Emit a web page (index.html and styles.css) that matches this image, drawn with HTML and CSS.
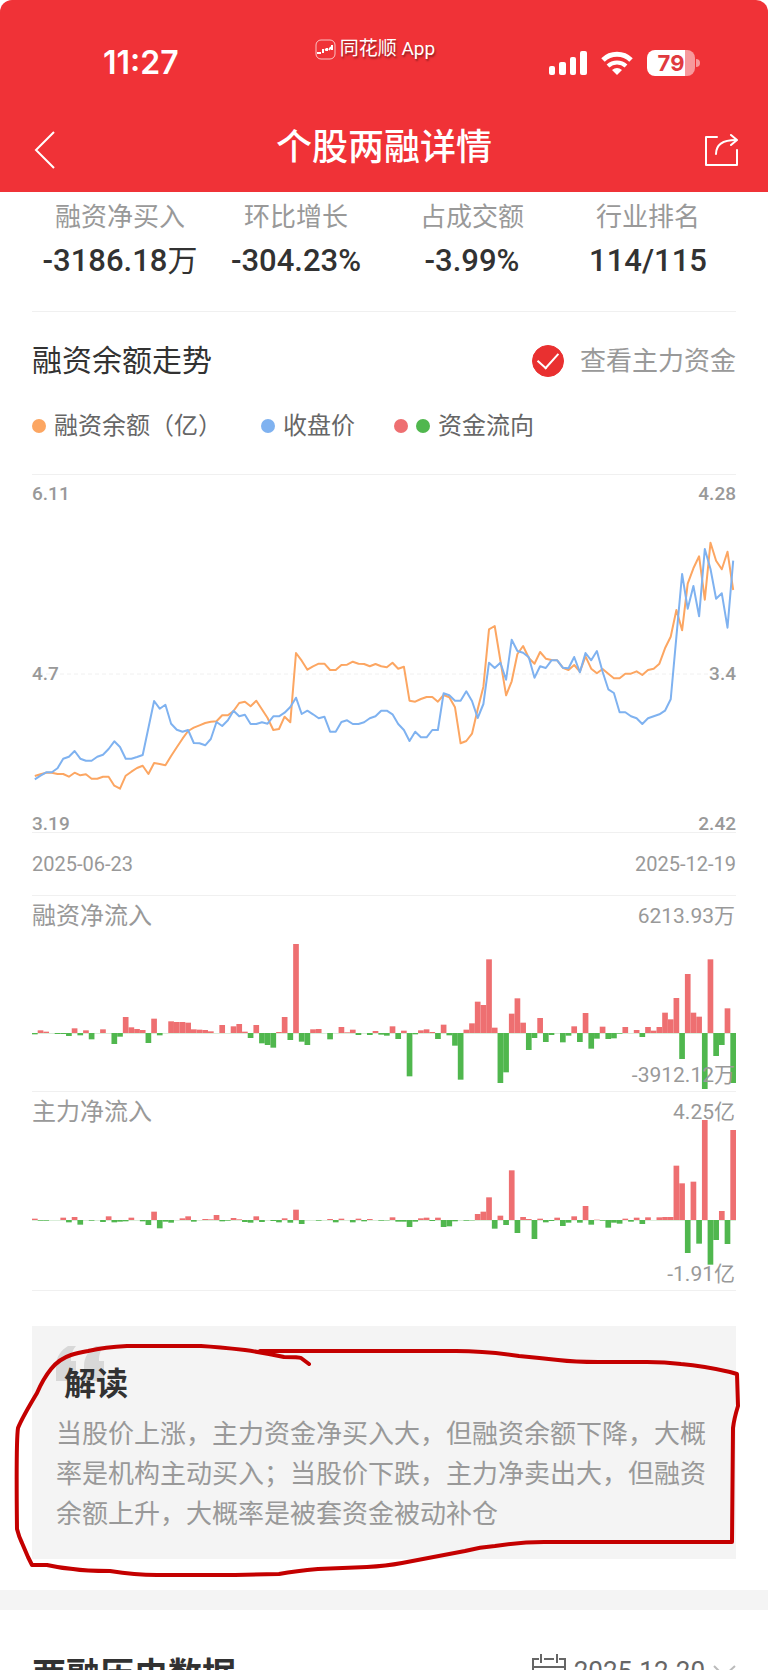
FILE: index.html
```html
<!DOCTYPE html>
<html lang="zh-CN">
<head>
  <meta charset="UTF-8">
  <meta name="viewport" content="width=device-width, initial-scale=1.0">
  <title>个股两融详情</title>
  <link rel="stylesheet" href="styles.css">
</head>
<body>
  <div class="screen">
    <header class="header">
      <div class="status-bar">
        <span class="time">11:27</span>
        <span class="brand">
          <svg width="21" height="21" viewBox="0 0 21 21" fill="none" stroke="#fff">
            <rect x="1" y="1" width="19" height="19" rx="5" stroke-opacity="0.7"/>
            <path d="M2 14h2M5 13v2M8 10v4M10 11l2-1M12 9v3M14 11l2-3M17 6v5" stroke-width="2"/>
          </svg>
          同花顺 App
        </span>
        <span class="status-icons">
          <svg width="38" height="24" viewBox="0 0 38 24" fill="#fff">
            <rect x="0" y="15" width="6" height="9" rx="2"/>
            <rect x="10" y="11" width="7" height="13" rx="2"/>
            <rect x="21" y="6" width="6" height="18" rx="2"/>
            <rect x="31" y="0" width="7" height="24" rx="2"/>
          </svg>
          <svg class="wifi" width="32" height="24" viewBox="0 0 32 24" fill="none" stroke="#fff" stroke-width="5">
            <path d="M2 9a20 20 0 0 1 28 0"/>
            <path d="M7 15a13 13 0 0 1 18 0" stroke-width="4"/>
            <path d="M11 19a8 8 0 0 1 10 0L16 24z" fill="#fff" stroke="none"/>
          </svg>
          <span class="battery">79</span>
          <svg width="4" height="8" viewBox="0 0 4 8"><path d="M0 0a4 4 0 0 1 0 8z" fill="#f7999c"/></svg>
        </span>
      </div>
      <nav class="nav">
        <button class="icon-btn" aria-label="返回">
          <svg width="22" height="38" viewBox="0 0 22 38" fill="none" stroke="#fff" stroke-width="2"><path d="M20 1L2 19l18 18"/></svg>
        </button>
        <h1>个股两融详情</h1>
        <button class="icon-btn" aria-label="分享">
          <svg width="34" height="34" viewBox="0 0 34 34" fill="none" stroke="#fff" stroke-width="2" stroke-linecap="round" stroke-linejoin="round">
            <path d="M13 4H2v28h31V17"/>
            <path d="M12 21C12 12 19 7 32 7"/>
            <path d="M27 2l6 5-6 5"/>
          </svg>
        </button>
      </nav>
    </header>

    <main>
      <dl class="stats">
        <div><dt>融资净买入</dt><dd>-3186.18<span class="unit">万</span></dd></div>
        <div><dt>环比增长</dt><dd>-304.23%</dd></div>
        <div><dt>占成交额</dt><dd>-3.99%</dd></div>
        <div><dt>行业排名</dt><dd>114/115</dd></div>
      </dl>

      <section class="trend">
        <div class="trend-head">
          <h2>融资余额走势</h2>
          <label class="toggle"><input type="checkbox" checked>查看主力资金</label>
        </div>
        <ul class="legend">
          <li><i class="dot orange"></i>融资余额（亿）</li>
          <li><i class="dot blue"></i>收盘价</li>
          <li><i class="dot red"></i><i class="dot green"></i>资金流向</li>
        </ul>

        <div class="pane line-pane">
          <svg id="line-chart" viewBox="0 0 704 357">
            <line x1="0" y1="199" x2="704" y2="199" stroke="#f0f0f0" stroke-dasharray="4 3"/>
          </svg>
          <div class="axis left"><span>6.11</span><span>4.7</span><span>3.19</span></div>
          <div class="axis right"><span>4.28</span><span>3.4</span><span>2.42</span></div>
        </div>
        <div class="dates"><span>2025-06-23</span><span>2025-12-19</span></div>

        <div class="pane">
          <svg id="margin-chart" viewBox="0 0 704 195"></svg>
          <h3 class="pane-title">融资净流入</h3>
          <div class="range"><span>6213.93万</span><span>-3912.12万</span></div>
        </div>
        <div class="pane last">
          <svg id="main-chart" viewBox="0 0 704 198"></svg>
          <h3 class="pane-title">主力净流入</h3>
          <div class="range"><span>4.25亿</span><span>-1.91亿</span></div>
        </div>
      </section>

      <section class="note">
        <div class="note-box">
          <svg class="quote" width="48" height="36" viewBox="0 0 48 36" fill="#d8d8d8">
            <path d="M12 0h8c-4 5-5 9-5 15h5v20H0V20C0 11 5 4 12 0z"/>
            <path d="M40 0h8c-4 5-5 9-5 15h5v20H28V20c0-9 5-16 12-20z"/>
          </svg>
          <h2>解读</h2>
          <p>当股价上涨，主力资金净买入大，但融资余额下降，大概率是机构主动买入；当股价下跌，主力净卖出大，但融资余额上升，大概率是被套资金被动补仓</p>
        </div>
        <svg class="marker" viewBox="0 0 768 299" preserveAspectRatio="none" fill="none" stroke="#c40000" stroke-width="4" stroke-linecap="round" stroke-linejoin="round">
          <path d="M309 73L301 67Q299 66 284 66Q266 62 245 59Q218 56 201 55H127Q105 56 88 60Q77 62 71 64Q59 68 51 78Q43 88 37 102Q22 127 18 137Q16 150 17 238Q19 246 22 252L28 266L32 274H47Q60 277 73 278Q85 280 110 280Q135 284 157 284H235L279 283Q296 280 318 278Q345 277 367 276Q386 275 402 272L465 260Q480 256 495 255Q520 251 544 251H732L733 137Q734 128 738 115L737 83L730 81Q704 75 681 73Q665 71 647 71H598Q575 71 558 69Q540 67 519 65Q485 60 456 60H260"/>
        </svg>
      </section>

      <section class="history">
        <h2>两融历史数据</h2>
        <button class="date-btn">
          <svg width="34" height="34" viewBox="0 0 34 34" fill="none" stroke="#666" stroke-width="2">
            <path d="M7 5H1v28h32V5h-6M12 5h10M9 0v9M25 0v9M1 13h32"/>
            <path d="M7 20h4M15 20h4M23 20h4M7 26h4M15 26h4M23 26h4" stroke-width="3"/>
          </svg>
          <span>2025-12-20</span>
          <svg width="23" height="12" viewBox="0 0 23 12" fill="none" stroke="#bbb" stroke-width="2"><path d="M1 1l10 10L22 1"/></svg>
        </button>
      </section>
    </main>
  </div>
  <script src="chart.js"></script>
</body>
</html>
```
FILE: styles.css
```css
* {
  box-sizing: border-box;
}

body {
  margin: 0;
  background: #fff;
  color: #323232;
  font-family: Roboto, "Noto Sans CJK SC", sans-serif;
}

h1, h2, h3, p, ul, dl, dd {
  margin: 0;
  padding: 0;
  font-weight: 400;
}

button {
  padding: 0;
  border: none;
  background: none;
  font: inherit;
  color: inherit;
  cursor: pointer;
}

svg {
  display: block;
}

.screen {
  height: 100vh;
  overflow: hidden;
}

.header {
  background: #f03237;
  color: #fff;
  border-radius: 12px 12px 0 0;
}

.status-bar {
  display: grid;
  grid-template-columns: 1fr auto 1fr;
  height: 109px;
  padding: 39px 68px 0 50px;
}

.time {
  padding-left: 53px;
  font-family: Inter, sans-serif;
  font-size: 32px;
  font-weight: 600;
  line-height: 48px;
}

.brand {
  display: flex;
  gap: 4px;
  height: 20px;
  font-size: 19px;
  line-height: 20px;
  text-shadow: 1px 2px 2px rgba(0, 0, 0, 0.4);
}

.status-icons {
  display: flex;
  align-items: center;
  justify-content: flex-end;
  height: 48px;
}

.wifi {
  margin: 0 14px;
}

.battery {
  width: 48px;
  height: 26px;
  margin-right: 1px;
  border-radius: 8px;
  background: linear-gradient(to right, #fff 79%, #f7999c 79%);
  color: #e03a3f;
  font-family: Inter, sans-serif;
  font-size: 22px;
  font-weight: 700;
  line-height: 26px;
  text-align: center;
}

.nav {
  display: flex;
  align-items: center;
  justify-content: space-between;
  height: 83px;
  padding: 0 30px 2px 34px;
}

.nav h1 {
  padding: 0 4px 4px 0;
  font-size: 36px;
  font-weight: 500;
  line-height: 44px;
}

.icon-btn {
  display: flex;
  width: 34px;
}

.stats {
  display: grid;
  grid-template-columns: repeat(4, 1fr);
  margin: 0 32px;
  padding: 8px 0 23px;
  border-bottom: 1px solid #f0f0f0;
  text-align: center;
}

.stats dt {
  color: #999;
  font-size: 26px;
  line-height: 34px;
}

.stats dd {
  font-size: 31px;
  font-weight: 500;
  line-height: 54px;
  white-space: nowrap;
}

.unit {
  font-size: 30px;
  font-weight: 400;
}

.trend {
  padding: 31px 32px 0;
}

.trend-head {
  display: flex;
  justify-content: space-between;
  align-items: center;
  height: 36px;
  line-height: 36px;
}

.trend-head h2 {
  font-size: 30px;
}

.toggle {
  display: flex;
  align-items: center;
  gap: 16px;
  color: #999;
  font-size: 26px;
}

.toggle input {
  appearance: none;
  display: grid;
  place-items: center;
  width: 32px;
  height: 32px;
  margin: 0;
  border: 1px solid #ccc;
  border-radius: 50%;
}

.toggle input:checked {
  border-color: #e93030;
  background: #e93030;
}

.toggle input:checked::after {
  content: "";
  width: 18px;
  height: 10px;
  margin-bottom: 6px;
  border: solid #fff;
  border-width: 0 0 2px 2px;
  transform: rotate(-48deg);
}

.legend {
  display: flex;
  gap: 39px;
  margin: 31px 0 32px;
  list-style: none;
  color: #666;
  font-size: 24px;
  line-height: 32px;
}

.legend li {
  display: flex;
  align-items: center;
  gap: 8px;
}

.dot {
  width: 14px;
  height: 14px;
  border-radius: 50%;
}

.orange { background: #fca662; }
.blue { background: #7fb2f0; }
.red { background: #ee6f71; }
.green { background: #50b74e; }

.pane {
  position: relative;
  border-top: 1px solid #f0f0f0;
}

.pane > svg {
  width: 100%;
}

.line-pane,
.last {
  border-bottom: 1px solid #f0f0f0;
}

/* labels drawn over the plots */
.axis {
  position: absolute;
  top: 7px;
  bottom: -4px;
  display: flex;
  flex-direction: column;
  justify-content: space-between;
  color: #999;
  font-size: 19px;
  font-weight: 500;
  line-height: 24px;
}

.axis span:nth-child(2) {
  margin-top: 30px;
}

.left { left: 0; }

.right {
  right: 0;
  text-align: right;
}

.dates {
  display: flex;
  justify-content: space-between;
  color: #999;
  font-size: 20px;
  line-height: 62px;
}

.pane-title {
  position: absolute;
  top: 4px;
  left: 0;
  color: #999;
  font-size: 24px;
  line-height: 32px;
}

.range {
  position: absolute;
  top: 4px;
  right: 1px;
  bottom: 0;
  display: flex;
  flex-direction: column;
  justify-content: space-between;
  color: #999;
  font-size: 21px;
  line-height: 32px;
  text-align: right;
}

.note {
  position: relative;
  padding: 35px 32px 31px;
}

.note-box {
  position: relative;
  padding: 38px 24px 25px;
  background: #f4f4f4;
}

.quote {
  position: absolute;
  top: 20px;
  left: 24px;
}

.note-box h2 {
  position: relative;
  padding-left: 8px;
  font-size: 32px;
  font-weight: 700;
  line-height: 40px;
}

.note-box p {
  padding-top: 10px;
  color: #999;
  font-size: 26px;
  line-height: 40px;
}

.marker {
  position: absolute;
  inset: 0;
  width: 100%;
  height: 100%;
}

.history {
  display: flex;
  align-items: center;
  justify-content: space-between;
  padding: 38px 32px;
  border-top: 20px solid #f4f4f4;
}

.history h2 {
  font-size: 34px;
  font-weight: 700;
}

.date-btn {
  display: flex;
  align-items: center;
  gap: 8px;
  padding-bottom: 4px;
  color: #666;
  font-size: 26px;
}
```
FILE: chart.js
```js
const SVG_NS = 'http://www.w3.org/2000/svg';
const WIDTH = 704;
const COUNT = 124;
const STEP = WIDTH / COUNT;

// plot levels, one per trading day
const balance = [
  768,763,758,758,762,762,770,758,766,763,776,776,770,770,797,806,767,755,744,737,
  762,729,732,736,708,682,656,633,623,616,609,605,604,586,586,573,549,545,559,542,
  568,594,630,627,590,607,399,422,449,439,431,431,450,450,435,434,425,431,432,439,
  432,439,442,428,446,440,542,545,537,531,531,545,525,532,562,670,663,641,568,500,
  328,318,422,526,484,402,378,414,431,396,416,420,421,443,450,435,455,409,446,460,
  447,461,475,475,461,461,454,465,450,446,431,385,350,270,331,191,145,109,239,68,
  122,148,95,210
];

const price = [
  778,767,757,757,745,716,710,693,716,722,722,710,704,687,664,681,716,716,711,705,
  624,543,566,554,611,629,635,630,669,670,676,657,606,618,601,572,589,584,612,612,
  607,611,589,589,578,561,533,582,572,583,595,590,635,635,606,601,612,612,607,595,
  589,572,572,583,612,630,663,635,652,652,630,630,520,526,542,542,514,543,594,552,
  428,444,428,479,359,393,398,412,473,439,444,421,421,443,445,411,457,399,421,393,
  455,508,519,577,577,589,595,612,595,589,583,572,538,350,162,266,198,289,87,147,
  236,220,323,122
];

const marginFlow = [
  -4,8,4,0,-3,-3,-9,14,-7,8,-19,0,11,0,-33,-11,48,17,12,9,
  -30,43,-7,0,35,33,33,31,11,10,9,5,0,24,0,20,27,4,-15,24,
  -31,-36,-44,3,48,-21,267,-26,-36,11,12,0,-19,0,18,2,10,-6,0,-6,
  6,-5,-8,20,-18,7,-130,-4,8,11,3,-18,25,-7,-38,-140,10,29,94,84,
  221,16,-150,-118,58,104,31,-51,-15,45,-27,-6,0,-28,-8,20,-27,60,-47,-17,
  19,-18,-16,-2,18,0,9,-12,18,7,18,61,41,105,-78,177,61,49,-168,221,
  -69,-36,74,-150
];

const mainFlow = [
  4,-2,-2,0,0,7,-7,9,-14,0,-2,0,-6,11,-7,-5,-4,7,0,-4,
  -15,25,-25,-5,-8,0,5,11,-5,0,3,2,15,-4,-2,6,2,-6,-8,11,
  -6,0,-3,-7,5,-8,31,-12,0,0,-2,0,3,-7,4,0,-7,4,-4,3,
  0,-2,-1,8,-5,-5,-21,-5,5,7,-3,7,-21,-19,-4,0,-2,-1,18,25,
  68,-26,13,-15,149,-39,9,3,-57,4,-7,-3,7,-18,-8,11,-8,42,-14,1,
  -2,-23,-8,-11,4,-5,7,-12,8,0,8,9,9,163,110,-99,115,-71,300,-134,
  -60,27,-72,270
];

function add(svg, tag, attrs) {
  const el = document.createElementNS(SVG_NS, tag);
  Object.entries(attrs).forEach(([k, v]) => el.setAttribute(k, v));
  svg.appendChild(el);
}

function drawLine(svg, data, color) {
  const points = data.map((v, i) => `${((i + 0.5) * STEP).toFixed(1)},${(45 + v / 3).toFixed(1)}`);
  add(svg, 'polyline', {
    points: points.join(' '),
    fill: 'none',
    stroke: color,
    'stroke-width': 2,
    'stroke-linejoin': 'round'
  });
}

function drawBars(svg, data, zero) {
  add(svg, 'rect', { x: 0, y: zero, width: WIDTH, height: 0.5, fill: '#b5dcb4' });
  data.forEach((v, i) => {
    const h = Math.abs(v) / 3;
    add(svg, 'rect', {
      x: (i * STEP).toFixed(2),
      y: v > 0 ? zero - h : zero,
      width: STEP.toFixed(2),
      height: h,
      fill: v > 0 ? '#ee6f71' : '#50b74e'
    });
  });
}

const lineChart = document.getElementById('line-chart');
drawLine(lineChart, balance, '#fca662');
drawLine(lineChart, price, '#7fb2f0');
drawBars(document.getElementById('margin-chart'), marginFlow, 137);
drawBars(document.getElementById('main-chart'), mainFlow, 128);
```
